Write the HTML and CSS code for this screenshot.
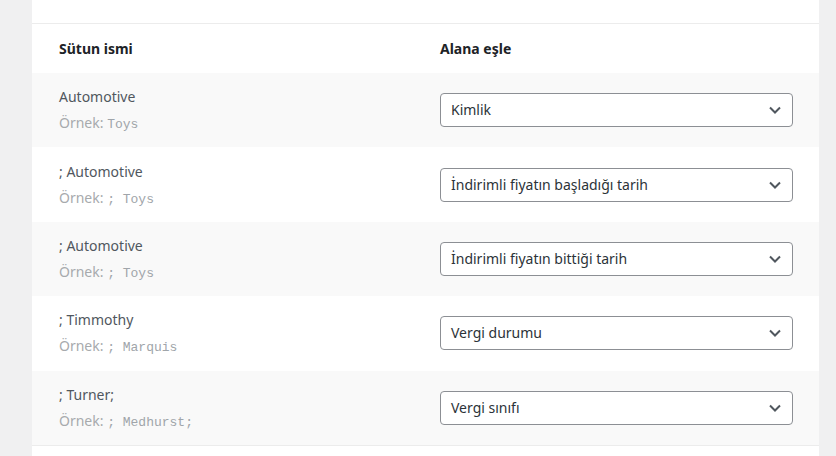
FILE: index.html
```html
<!DOCTYPE html>
<html lang="tr">
<head>
    <meta charset="UTF-8">
    <meta name="viewport" content="width=device-width, initial-scale=1.0">
    <title>Sütunları eşle</title>
    <link rel="stylesheet" href="styles.css">
</head>
<body>

    <!-- Eşleme kartı -->
    <div class="importer-card">
        <div class="card-top"></div>

        <table class="mapping-table">
            <thead>
                <tr>
                    <th class="col-name">Sütun ismi</th>
                    <th class="col-field">Alana eşle</th>
                </tr>
            </thead>
            <tbody>
                <tr>
                    <td class="col-name">
                        Automotive
                        <span class="description">Örnek: <code>Toys</code></span>
                    </td>
                    <td class="col-field">
                        <div class="select-box">
                            <span>Kimlik</span>
                            <svg class="chevron" viewBox="0 0 12 8" width="12" height="8"><path d="M1 1.5l5 5 5-5" fill="none" stroke="#50575e" stroke-width="2"/></svg>
                        </div>
                    </td>
                </tr>
                <tr>
                    <td class="col-name">
                        ; Automotive
                        <span class="description">Örnek: <code>; Toys</code></span>
                    </td>
                    <td class="col-field">
                        <div class="select-box">
                            <span>İndirimli fiyatın başladığı tarih</span>
                            <svg class="chevron" viewBox="0 0 12 8" width="12" height="8"><path d="M1 1.5l5 5 5-5" fill="none" stroke="#50575e" stroke-width="2"/></svg>
                        </div>
                    </td>
                </tr>
                <tr>
                    <td class="col-name">
                        ; Automotive
                        <span class="description">Örnek: <code>; Toys</code></span>
                    </td>
                    <td class="col-field">
                        <div class="select-box">
                            <span>İndirimli fiyatın bittiği tarih</span>
                            <svg class="chevron" viewBox="0 0 12 8" width="12" height="8"><path d="M1 1.5l5 5 5-5" fill="none" stroke="#50575e" stroke-width="2"/></svg>
                        </div>
                    </td>
                </tr>
                <tr>
                    <td class="col-name">
                        ; Timmothy
                        <span class="description">Örnek: <code>; Marquis</code></span>
                    </td>
                    <td class="col-field">
                        <div class="select-box">
                            <span>Vergi durumu</span>
                            <svg class="chevron" viewBox="0 0 12 8" width="12" height="8"><path d="M1 1.5l5 5 5-5" fill="none" stroke="#50575e" stroke-width="2"/></svg>
                        </div>
                    </td>
                </tr>
                <tr>
                    <td class="col-name">
                        ; Turner;
                        <span class="description">Örnek: <code>; Medhurst;</code></span>
                    </td>
                    <td class="col-field">
                        <div class="select-box">
                            <span>Vergi sınıfı</span>
                            <svg class="chevron" viewBox="0 0 12 8" width="12" height="8"><path d="M1 1.5l5 5 5-5" fill="none" stroke="#50575e" stroke-width="2"/></svg>
                        </div>
                    </td>
                </tr>
            </tbody>
        </table>
    </div>

</body>
</html>
```

FILE: styles.css
```css
body {
    font-family: "Noto Sans", "Open Sans", sans-serif;
    font-size: 14px;
    background-color: #f0f0f1;
    color: #50575e;
    margin: 0;
    padding: 0 17px 0 32px;
}

/* Kart */
.importer-card {
    background-color: #ffffff;
    min-height: 456px;
}

.card-top {
    height: 23px;
    border-bottom: 1px solid #ececec;
}

/* Tablo */
.mapping-table {
    width: 100%;
    border-collapse: collapse;
    border-bottom: 1px solid #ececec;
}

.mapping-table th {
    height: 49px;
    padding: 0;
    text-align: left;
    font-weight: 700;
    color: #1d2327;
    vertical-align: middle;
}

.mapping-table td {
    height: 74.4px;
    padding: 0;
    vertical-align: middle;
    line-height: 20px;
}

.mapping-table tbody tr:nth-child(odd) {
    background-color: #f9f9f9;
}

.col-name {
    width: 381px;
    padding-left: 27px !important;
}

.mapping-table td.col-name {
    height: 72.4px;
    padding-top: 2px;
}

.col-field {
    padding-right: 26px !important;
}

.description {
    display: block;
    margin-top: 6px;
    color: #a7aaad;
}

.description code {
    font-family: "Liberation Mono", "DejaVu Sans Mono", monospace;
    font-size: 13px;
    color: #a0a5aa;
}

/* Seçim kutusu */
.select-box {
    display: flex;
    align-items: center;
    justify-content: space-between;
    height: 32px;
    padding: 0 11px 0 10px;
    border: 1px solid #8c8f94;
    border-radius: 4px;
    background-color: #ffffff;
    color: #2c3338;
}

.chevron {
    display: block;
}
```
